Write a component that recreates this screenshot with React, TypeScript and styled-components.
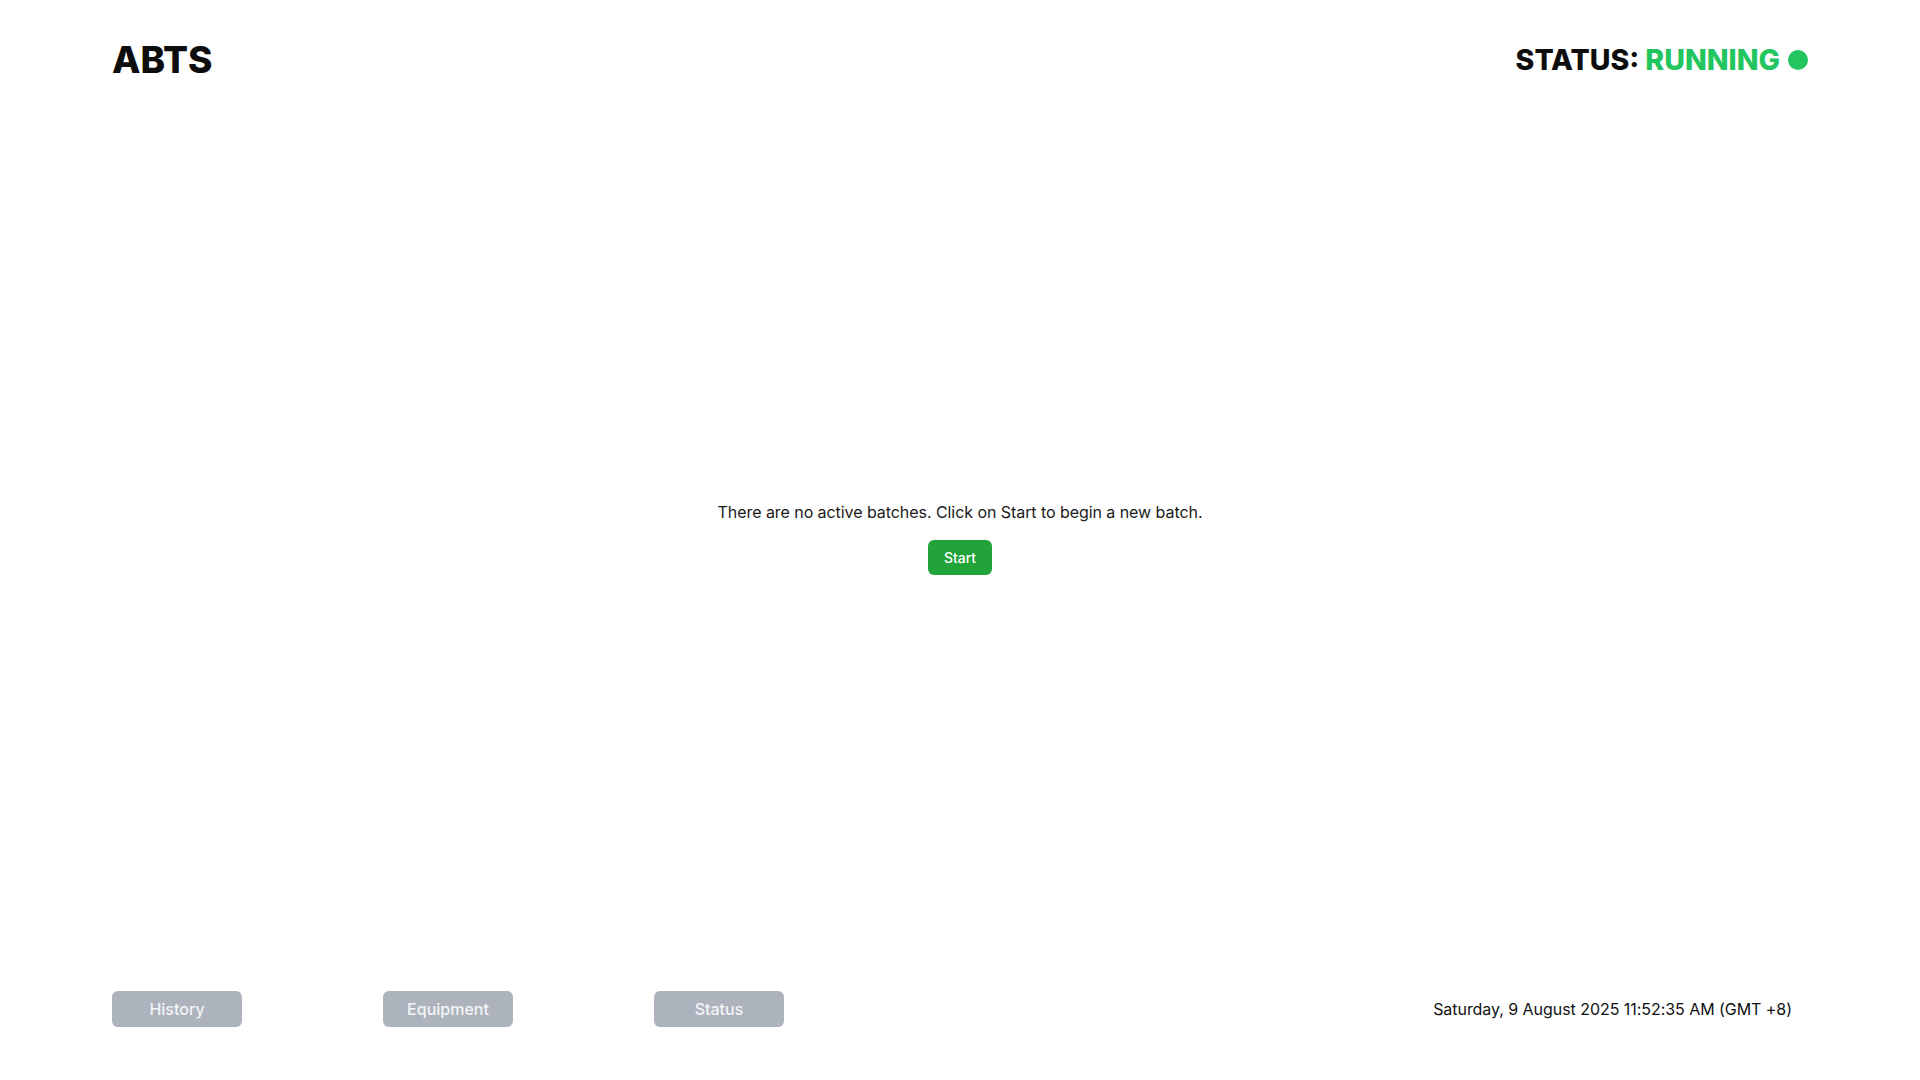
import React from "react";
import styled, { createGlobalStyle } from "styled-components";

const GlobalStyle = createGlobalStyle`
  html, body {
    margin: 0;
    padding: 0;
    background: #ffffff;
    font-family: Inter, "Noto Sans", "Liberation Sans", sans-serif;
    color: #111111;
  }
  * { box-sizing: border-box; }
`;

const Page = styled.div`
  min-height: 100vh;
  display: flex;
  flex-direction: column;
  padding: 0 112px;
`;

const Header = styled.header`
  display: flex;
  align-items: center;
  justify-content: space-between;
  height: 40px;
  margin-top: 40px;
`;

const Logo = styled.h1`
  margin: 0;
  font-size: 37px;
  font-weight: 800;
  line-height: 40px;
  color: #0d0d0d;
`;

const StatusWrap = styled.div`
  display: flex;
  align-items: center;
  gap: 8px;
  font-size: 28.5px;
  font-weight: 800;
  line-height: 40px;
  color: #0d0d0d;
`;

const StatusLabel = styled.span`
  display: flex;
  gap: 6px;
`;

const StatusValue = styled.span`
  color: #22c55e;
`;

const Dot = styled.span`
  width: 20px;
  height: 20px;
  border-radius: 50%;
  background: #22c55e;
  display: inline-block;
`;

const Main = styled.main`
  flex: 1;
  display: flex;
  flex-direction: column;
  align-items: center;
  justify-content: center;
  gap: 16px;
  padding-top: 4px;
`;

const Message = styled.p`
  margin: 0;
  font-size: 16px;
  line-height: 24px;
  letter-spacing: -0.06px;
  color: #1a1a1a;
`;

const StartButton = styled.button`
  height: 35px;
  padding: 0 16px;
  border: none;
  border-radius: 6px;
  background: #22a33a;
  color: #ffffff;
  font-family: inherit;
  font-size: 14px;
  font-weight: 500;
  cursor: pointer;
`;

const Footer = styled.footer`
  display: flex;
  align-items: center;
  justify-content: space-between;
  margin-bottom: 53px;
`;

const NavGroup = styled.nav`
  display: flex;
  gap: 141px;
`;

const NavButton = styled.button`
  width: 130px;
  height: 36px;
  border: none;
  border-radius: 6px;
  background: #adb3bc;
  color: #f4f5f7;
  font-family: inherit;
  font-size: 16px;
  font-weight: 500;
  cursor: pointer;
`;

const DateText = styled.div`
  font-size: 16px;
  line-height: 24px;
  letter-spacing: -0.05px;
  color: #111111;
  padding-right: 16px;
`;

export default function App() {
  return (
    <>
      <GlobalStyle />
      <Page>
        <Header>
          <Logo>ABTS</Logo>
          <StatusWrap>
            <StatusLabel>
              <span>STATUS:</span>
              <StatusValue>RUNNING</StatusValue>
            </StatusLabel>
            <Dot />
          </StatusWrap>
        </Header>
        <Main>
          <Message>There are no active batches. Click on Start to begin a new batch.</Message>
          <StartButton>Start</StartButton>
        </Main>
        <Footer>
          <NavGroup>
            <NavButton>History</NavButton>
            <NavButton>Equipment</NavButton>
            <NavButton>Status</NavButton>
          </NavGroup>
          <DateText>Saturday, 9 August 2025 11:52:35 AM (GMT +8)</DateText>
        </Footer>
      </Page>
    </>
  );
}
